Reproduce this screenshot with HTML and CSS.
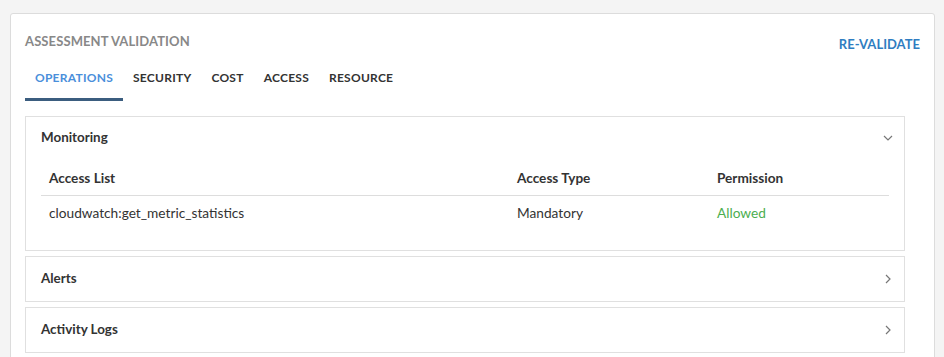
FILE: index.html
```html
<!DOCTYPE html>
<html>
<head>
<meta charset="utf-8">
<link rel="stylesheet" href="styles.css">
</head>
<body>
<div class="card">
  <div class="card-head">
    <div class="title">ASSESSMENT VALIDATION</div>
    <a class="revalidate">RE-VALIDATE</a>
  </div>
  <div class="tabs">
    <div class="tab active">OPERATIONS</div>
    <div class="tab">SECURITY</div>
    <div class="tab">COST</div>
    <div class="tab">ACCESS</div>
    <div class="tab">RESOURCE</div>
  </div>
  <div class="panels">
    <div class="acc open">
      <div class="acc-head">
        <span>Monitoring</span>
        <svg class="chev" width="12" height="12" viewBox="0 0 12 12"><path d="M2 4 L6 8 L10 4" fill="none" stroke="#777" stroke-width="1.2"/></svg>
      </div>
      <div class="table">
        <div class="row head">
          <div class="cell">Access List</div>
          <div class="cell">Access Type</div>
          <div class="cell">Permission</div>
        </div>
        <div class="row">
          <div class="cell">cloudwatch:get_metric_statistics</div>
          <div class="cell">Mandatory</div>
          <div class="cell allowed">Allowed</div>
        </div>
      </div>
    </div>
    <div class="acc">
      <div class="acc-head">
        <span>Alerts</span>
        <svg class="chev" width="12" height="12" viewBox="0 0 12 12"><path d="M4 2 L8 6 L4 10" fill="none" stroke="#777" stroke-width="1.2"/></svg>
      </div>
    </div>
    <div class="acc">
      <div class="acc-head">
        <span>Activity Logs</span>
        <svg class="chev" width="12" height="12" viewBox="0 0 12 12"><path d="M4 2 L8 6 L4 10" fill="none" stroke="#777" stroke-width="1.2"/></svg>
      </div>
    </div>
  </div>
</div>
</body>
</html>
```
FILE: styles.css
```css
html, body {
  margin: 0;
  padding: 0;
  background: #f4f4f4;
  font-family: "Lato", "Open Sans", sans-serif;
  color: #333;
  font-size: 13.7px;
}
body {
  padding: 13px 9px 0 10px;
  height: 357px;
  box-sizing: border-box;
  overflow: hidden;
}
.card {
  background: #fff;
  border: 1px solid #dcdcdc;
  border-radius: 3px;
  padding: 17px 14px 20px 14px;
  min-height: 400px;
}
.card-head {
  display: flex;
  justify-content: space-between;
  align-items: center;
  height: 20px;
}
.title {
  font-size: 13px;
  font-weight: 700;
  color: #888;
  letter-spacing: 0.1px;
}
.revalidate {
  font-size: 13px;
  font-weight: 700;
  color: #2f7dc1;
  margin-top: 6px;
}
.tabs {
  display: flex;
  margin-top: 7px;
}
.tab {
  padding: 10px 10px 10px;
  line-height: 20px;
  font-weight: 700;
  font-size: 12px;
  color: #333;
  border-bottom: 3px solid transparent;
  letter-spacing: 0.25px;
}
.active {
  color: #4a8fdb;
  border-bottom-color: #3b5d7f;
}
.panels {
  margin-top: 15px;
  margin-right: 15px;
  display: flex;
  flex-direction: column;
  gap: 5px;
}
.acc {
  border: 1px solid #e0e0e0;
}
.acc-head {
  display: flex;
  justify-content: space-between;
  align-items: center;
  height: 44px;
  padding: 0 10px 3px 15px;
  box-sizing: border-box;
  font-weight: 700;
  font-size: 13.4px;
}
.acc-head .chev {
  margin-top: 2px;
}
.open .acc-head {
  height: 43px;
  padding-bottom: 3px;
}
.table {
  margin: 0 15px 19px 15px;
}
.row {
  display: grid;
  grid-template-columns: 468px 200px 1fr;
  height: 35px;
  padding-bottom: 2px;
  box-sizing: border-box;
  align-items: center;
}
.row.head {
  height: 36px;
  padding-bottom: 0;
  font-weight: 700;
  font-size: 13.6px;
  border-bottom: 1px solid #ddd;
}
.cell {
  padding-left: 8px;
}
.allowed {
  color: #4cae50;
}
.chev {
  display: block;
}
```
